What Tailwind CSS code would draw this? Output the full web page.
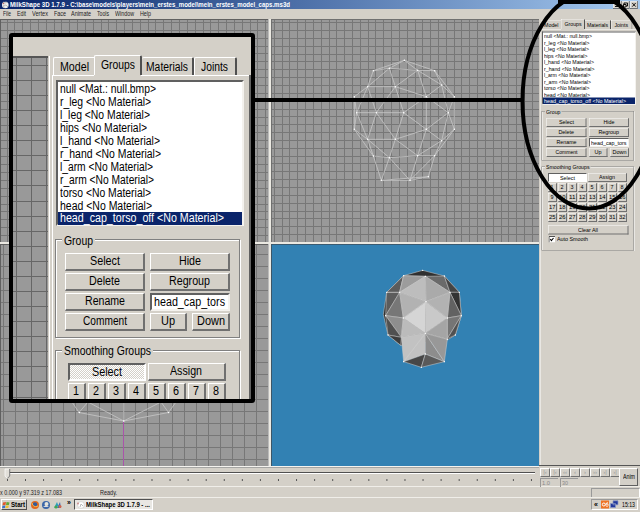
<!DOCTYPE html>
<html lang="en">
<head>
<meta charset="utf-8">
<title>MilkShape 3D 1.7.9</title>
<script src="https://cdn.jsdelivr.net/npm/@tailwindcss/browser@4"></script>
</head>
<body class="w-[640px] h-[512px] overflow-hidden bg-[#d4d0c8] font-['Liberation_Sans',Arial,sans-serif] text-black">

<template id="panel">
  <div class="w-[204px] h-[894px] text-[12.5px] leading-[13px] bg-[#d4d0c8]">
    <!-- tabs -->
    <div class="flex items-end h-[20px] pl-px">
      <div class="flex items-center justify-center w-[41px] h-[18px] border-t border-l border-white rounded-tl-xs pt-px"><span data-w="29">Model</span></div>
      <div class="flex items-center justify-center w-[48px] h-[20px] border-t border-l border-white border-r-2 border-r-[#505050] rounded-t-xs pb-px"><span data-w="34">Groups</span></div>
      <div class="flex items-center justify-center w-[52px] h-[18px] border-t border-white border-r-2 border-r-[#505050] rounded-t-xs pt-px"><span data-w="42">Materials</span></div>
      <div class="flex items-center justify-center w-[43px] h-[18px] border-t border-l border-white border-r-2 border-r-[#505050] rounded-t-xs pt-px pr-px"><span data-w="27">Joints</span></div>
    </div>
    <div class="h-[874px] border-l border-white relative">
      <div class="flex h-px"><i class="w-[41px] bg-white"></i><i class="w-[47px]"></i><i class="flex-1 bg-white"></i></div>
      <div class="pl-[3px] pt-[4px]">
        <!-- group list -->
        <div class="w-[188px] h-[146px] bg-white border-t-2 border-l-2 border-t-[#606060] border-l-[#606060] border-r-2 border-b-2 border-r-[#f4f2ee] border-b-[#f4f2ee] pt-px">
          <div class="h-[13px] pl-[2px]"><span data-w="96">null &lt;Mat.: null.bmp&gt;</span></div>
          <div class="h-[13px] pl-[2px]"><span data-w="91">r_leg &lt;No Material&gt;</span></div>
          <div class="h-[13px] pl-[2px]"><span data-w="90">l_leg &lt;No Material&gt;</span></div>
          <div class="h-[13px] pl-[2px]"><span data-w="87">hips &lt;No Material&gt;</span></div>
          <div class="h-[13px] pl-[2px]"><span data-w="100">l_hand &lt;No Material&gt;</span></div>
          <div class="h-[13px] pl-[2px]"><span data-w="101">r_hand &lt;No Material&gt;</span></div>
          <div class="h-[13px] pl-[2px]"><span data-w="93">l_arm &lt;No Material&gt;</span></div>
          <div class="h-[13px] pl-[2px]"><span data-w="94">r_arm &lt;No Material&gt;</span></div>
          <div class="h-[13px] pl-[2px]"><span data-w="91">torso &lt;No Material&gt;</span></div>
          <div class="h-[12px] pl-[2px]"><span data-w="92">head &lt;No Material&gt;</span></div>
          <div class="h-[13px] pl-[2px] bg-[#0a246a] text-white leading-[13px]"><span data-w="164">head_cap_torso_off &lt;No Material&gt;</span></div>
        </div>
      </div>
      <!-- group box -->
      <div class="ml-[2px] mt-[9px] w-[185px] h-[103px] relative">
        <div class="absolute inset-x-0 top-[4px] bottom-0 border border-[#808080] shadow-[1px_1px_0_#fff,inset_1px_1px_0_#fff]"></div>
        <div class="relative h-[13px] ml-[7px] w-[33px] pl-[2px] bg-[#d4d0c8]"><span data-w="29">Group</span></div>
        <div class="relative grid grid-cols-[80px_37px_37px] gap-x-[5px] gap-y-[2px] ml-[10px] mt-[5px]">
          <button class="h-[18px] border border-white border-r-2 border-b-2 border-r-[#707070] border-b-[#707070]"><span data-w="30">Select</span></button>
          <button class="col-span-2 h-[18px] w-[80px] border border-white border-r-2 border-b-2 border-r-[#707070] border-b-[#707070]"><span data-w="22">Hide</span></button>
          <button class="h-[18px] border border-white border-r-2 border-b-2 border-r-[#707070] border-b-[#707070]"><span data-w="31">Delete</span></button>
          <button class="col-span-2 h-[18px] w-[80px] border border-white border-r-2 border-b-2 border-r-[#707070] border-b-[#707070]"><span data-w="41">Regroup</span></button>
          <button class="h-[18px] border border-white border-r-2 border-b-2 border-r-[#707070] border-b-[#707070]"><span data-w="40">Rename</span></button>
          <div class="col-span-2 h-[18px] w-[80px] bg-white border-2 border-t-[#606060] border-l-[#606060] border-r-[#f4f2ee] border-b-[#f4f2ee] pl-[2px] leading-[15px]"><span data-w="71">head_cap_tors</span></div>
          <button class="h-[18px] border border-white border-r-2 border-b-2 border-r-[#707070] border-b-[#707070]"><span data-w="44">Comment</span></button>
          <button class="h-[18px] border border-white border-r-2 border-b-2 border-r-[#707070] border-b-[#707070]"><span data-w="14">Up</span></button>
          <button class="h-[18px] w-[38px] border border-white border-r-2 border-b-2 border-r-[#707070] border-b-[#707070]"><span data-w="28">Down</span></button>
        </div>
      </div>
      <!-- smoothing groups -->
      <div class="ml-[2px] mt-[7px] w-[185px] h-[173px] relative">
        <div class="absolute inset-x-0 top-[5px] bottom-0 border border-[#808080] shadow-[1px_1px_0_#fff,inset_1px_1px_0_#fff]"></div>
        <div class="relative h-[13px] ml-[7px] w-[91px] pl-[2px] bg-[#d4d0c8]"><span data-w="87">Smoothing Groups</span></div>
        <div class="relative flex gap-[2px] ml-[13px] mt-[5px]">
          <button class="h-[18px] w-[78px] border-2 border-t-[#606060] border-l-[#606060] border-r-white border-b-white bg-[repeating-conic-gradient(#fff_0_25%,#d4d0c8_0_50%)] bg-[length:2px_2px]"><span data-w="30">Select</span></button>
          <button class="h-[18px] w-[78px] border border-white border-r-2 border-b-2 border-r-[#707070] border-b-[#707070]"><span data-w="32">Assign</span></button>
        </div>
        <div class="relative grid grid-cols-8 gap-[2px] w-[158px] ml-[13px] mt-[2px]" data-numbers></div>
        <button class="relative block ml-[13px] mt-[7px] h-[18px] w-[161px] border border-white border-r-2 border-b-2 border-r-[#707070] border-b-[#707070]"><span data-w="40">Clear All</span></button>
        <div class="relative flex items-center ml-[14px] mt-[3px] gap-[4px]">
          <svg class="w-[13px] h-[13px]" viewBox="0 0 13 13"><path d="M0 0h13v13H0z" fill="#fff"/><path d="M1 13V1H13" fill="none" stroke="#505050" stroke-width="2"/><path d="M3.5 6l2.3 3L10 4" fill="none" stroke="#000" stroke-width="2.2"/></svg>
          <span data-w="62">Auto Smooth</span>
        </div>
      </div>
    </div>
  </div>
</template>

<div class="flex flex-col w-[640px] h-[512px] relative text-[6px]">
  <!-- title bar -->
  <div class="flex items-center h-[9px] bg-linear-to-r from-[#0a246a] to-[#a6caf0] text-white font-bold text-[6.5px] leading-[9px] shrink-0">
    <svg class="w-[8px] h-[8px] ml-px mr-px shrink-0" viewBox="0 0 8 8"><circle cx="4.3" cy="4" r="3.3" fill="#eee"/><path d="M2 1l2 1 2-1M3 7L2.500 4.500 5 4l2 2" fill="none" stroke="#aaa" stroke-width=".8"/><circle cx="2.500" cy="2.500" r=".8" fill="#b66"/></svg>
    <span data-w="280">MilkShape 3D 1.7.9 - C:\base\models\players\mein_erstes_model\mein_erstes_model_caps.ms3d</span>
    <div class="ml-auto mr-[2px] flex text-black">
      <svg class="w-[25px] h-[8px]" viewBox="0 0 25 8"><g fill="#d4d0c8" stroke="#fff" stroke-width=".6"><path d="M.3.300h8v7h-8zM8.300.300h8v7h-8zM17.500.300h7v7h-7z"/></g><path d="M8.300 0v7.500H0M16.300 0v7.500H9M24.600 0v7.500H17" fill="none" stroke="#404040" stroke-width=".7"/><path d="M2 5.500h3M11 4V2h3.500v3H13M10.500 3.500H13V6h-2.500zM19.300 2l3.400 3.600M22.700 2l-3.400 3.600" fill="none" stroke="#000" stroke-width=".9"/></svg>
    </div>
  </div>
  <!-- menu -->
  <div class="flex h-[10px] shrink-0 leading-[10px] text-[6.5px] pl-[3px] text-[#222]">
    <div class="w-[14px]"><span data-w="8">File</span></div><div class="w-[15px]"><span data-w="9">Edit</span></div><div class="w-[22px]"><span data-w="16">Vertex</span></div><div class="w-[17px]"><span data-w="12">Face</span></div><div class="w-[26px]"><span data-w="20">Animate</span></div><div class="w-[18px]"><span data-w="12">Tools</span></div><div class="w-[25px]"><span data-w="19">Window</span></div><div><span data-w="11">Help</span></div>
  </div>

  <div class="flex h-[447px] shrink-0">
    <!-- viewports -->
    <div class="grid grid-cols-[269px_268px] grid-rows-[223px_222px] gap-[2px] w-[539px] shrink-0 bg-[#ebe9e2]">
      <svg class="w-[269px] h-[223px]" viewBox="0 19 269 223">
        <rect y="19" width="269" height="223" fill="#999"/>
        <path data-grid="0 19 269 223 7 22.300 7.840 7.900" stroke="#777" fill="none"/>
        <path d="M0 19.500h269M.5 19v223" stroke="#606060" fill="none"/><path d="M268.500 19v223" stroke="#bbb"/>
      </svg>
      <svg class="w-[268px] h-[223px]" viewBox="271 19 268 223">
        <rect x="271" y="19" width="268" height="223" fill="#999"/>
        <path data-grid="271 19 268 223 274.300 22.700 7.820 7.850" stroke="#777" fill="none"/>
        <path d="M271 19.500h268M271.500 19v223" stroke="#707070" fill="none"/>
        <g transform="translate(340 50) scale(.33333)" fill="none" stroke="#c6c6c6" stroke-width="2.400">
          <path d="M193 31L100 62 83 110 43 140V238L100 318 124 391 210 391 265 380 284 317 343 238V140L284 62zM193 31L148 55 100 62M193 31L233 61 284 62M148 55L233 61M148 55L83 110H166L148 55M233 61L166 110 259 140 233 61 305 105 284 62M305 105L259 140M305 105L343 140M83 110L50 188 43 140M83 110L109 188M166 110L109 188M166 110L191 188M50 188H191L259 140V238L191 188 166 268 109 188 83 268 50 188 43 238 83 268H166L259 238 325 188 259 140M305 105L325 188 343 140M325 188L343 238 305 272 325 188M259 238L305 272 284 317M259 238L233 317 166 268 148 323 83 268 100 318 148 323 233 317H284M233 317L305 272M148 323L124 391 265 380M148 323L210 391 233 317M210 391L284 317"/>
          <path stroke="#fff" stroke-width="4.500" stroke-linecap="round" d="M193 31h.1M148 55h.1M100 62h.1M233 61h.1M284 62h.1M83 110h.1M166 110h.1M305 105h.1M43 140h.1M259 140h.1M343 140h.1M50 188h.1M109 188h.1M191 188h.1M325 188h.1M43 238h.1M259 238h.1M343 238h.1M83 268h.1M166 268h.1M305 272h.1M100 318h.1M148 323h.1M233 317h.1M284 317h.1M124 391h.1M210 391h.1M265 380h.1"/>
        </g>
      </svg>
      <svg class="w-[269px] h-[222px]" viewBox="0 244 269 222">
        <rect y="244" width="269" height="222" fill="#999"/>
        <path data-grid="0 244 269 222 3.300 254.300 12.050 12.060" stroke="#777" fill="none"/>
        <path d="M0 244.500h269M.5 244v222" stroke="#606060" fill="none"/><path d="M268.500 244v222" stroke="#bbb"/>
        <path d="M123.500 421v45" stroke="#b050b0" stroke-width=".9"/>
        <path d="M72 402L79 412.500 123.700 421 168.500 412.500 176 402M79 412.500L88 402 123.700 421V402M168.500 412.500L161 402 123.700 421" fill="none" stroke="#c6c6c6" stroke-width=".8"/>
        <path stroke="#fff" stroke-width="1.500" stroke-linecap="round" d="M79.300 412.500h.1M123.700 421h.1M168.500 412.500h.1"/>
      </svg>
      <svg class="w-[268px] h-[222px]" viewBox="271 244 268 222">
        <rect x="271" y="244" width="268" height="222" fill="#3281b3"/>
        <path d="M271 244.400h268M271.500 244v222" stroke="#3c5668" fill="none"/>
        <g transform="translate(370 260) scale(.33333)" stroke="#ccc" stroke-width="1.600" stroke-linejoin="round">
          <path fill="#303030" d="M158 31L223 48 268 97 274 167 256 225 232 240 92 256 54 225 40 163 50 97 101 47z"/>
          <path fill="#5c5c5c" d="M101 47L50 97 89 97zM50 97L89 97 47 167z"/>
          <path fill="#747474" d="M101 47L166 49 89 97z"/><path fill="#777" d="M89 97L47 167 100 174z"/>
          <path fill="#8e8e8e" d="M47 167L100 174 94 232z"/><path fill="#505050" d="M47 167L94 232 54 225z"/><path fill="#3d3d3d" d="M54 225L94 232 92 256z"/>
          <path fill="#9c9c9c" d="M101 47L166 49 89 97z"/>
          <path fill="#6a6a6a" d="M166 49L223 48 240 97z"/><path fill="#444" d="M223 48L268 97 240 97z"/>
          <path fill="#333" d="M240 97H268L274 167z"/><path fill="#626262" d="M240 97L274 167 232 174z"/><path fill="#757575" d="M232 174L274 167 232 236z"/><path fill="#505050" d="M274 167L256 225 232 236z"/>
          <path fill="#bdbdbd" d="M166 49L89 97 168 125z"/><path fill="#aaa" d="M166 49L240 97 168 125z"/>
          <path fill="#b2b2b2" d="M89 97L168 125 100 174zM240 97L168 125 232 174z"/>
          <path fill="#d5d5d5" stroke="#d5d5d5" d="M168 125L100 174 166 220z"/><path fill="#c9c9c9" stroke="#c9c9c9" d="M168 125L232 174 166 220z"/>
          <path fill="#bbb" d="M100 174L166 220 94 232z"/><path fill="#a5a5a5" d="M232 174L166 220 232 238z"/>
          <path fill="#c2c2c2" d="M94 232L166 220 101 305zM166 220V282L101 305z"/><path fill="#8d8d8d" d="M166 220L223 305 166 282z"/><path fill="#989898" d="M166 220L232 238 223 305z"/>
          <path fill="#474747" d="M101 305L166 282 154 322z"/><path fill="#5a5a5a" d="M166 282L223 305 154 322z"/>
          <path fill="none" stroke="#fff" stroke-width="4" stroke-linecap="round" d="M158 31h.1M101 47h.1M166 49h.1M223 48h.1M50 97h.1M89 97h.1M240 97h.1M268 97h.1M168 125h.1M47 167h.1M274 167h.1M100 174h.1M232 174h.1M166 220h.1M54 225h.1M256 225h.1M232 238h.1M166 282h.1M101 305h.1M223 305h.1M154 322h.1"/>
        </g>
      </svg>
    </div>
    <div class="w-[101px] overflow-hidden border-b border-[#555]">
      <div class="origin-top-left scale-50 w-[204px] ml-px" data-panel></div>
    </div>
  </div>

  <!-- timeline -->
  <div class="flex h-[21px] shrink-0 border-b border-[#f0eee9]">
    <svg class="w-[539px] h-[20px] shrink-0" viewBox="0 466 539 20">
      <path d="M0 466.500h539" stroke="#f5f3ef"/><path d="M0 467.500h539" stroke="#999" stroke-width=".8"/><path d="M8 472.500h527" stroke="#505050"/><path d="M8 473.500h527" stroke="#fff"/>
      <path d="M7.500 479v2" stroke="#555"/>
      <path d="M25 480h512" stroke="#555" stroke-width="2" stroke-dasharray="1 17.070"/>
      <path d="M5 469h4.500v7L7.300 478.500 5 476z" fill="#e2dfd9" stroke="#fff" stroke-width=".7"/><path d="M9.700 469v7L7.300 478.500" fill="none" stroke="#505050" stroke-width=".8"/>
    </svg>
    <div class="flex w-[101px] pt-[2px] pl-px">
      <div class="w-[79px] shrink-0">
        <div class="flex text-[#999] text-[6px] leading-[8px]" data-transport></div>
        <div class="flex gap-[2px] text-[#888] text-[6px] mt-px">
          <div class="w-[18px] h-[9px] border-t border-l border-[#999] pl-px leading-[8px]"><span data-w="8">1.0</span></div>
          <div class="w-[18px] h-[9px] border-t border-l border-[#999] pl-px leading-[8px]"><span data-w="6">30</span></div>
        </div>
      </div>
      <div class="w-[19px] shrink-0 h-[18px] border border-white border-r-[#606060] border-b-[#606060] flex items-center justify-center text-[6.5px]"><span data-w="12">Anim</span></div>
    </div>
  </div>
  <!-- status bar -->
  <div class="flex items-center h-[11px] shrink-0 border-b border-[#f0eee9] text-[6.5px] leading-[9px] text-[#222]">
    <div class="w-[100px]"><span data-w="62">x 0.000 y 97.319 z 17.083</span></div><div><span data-w="17">Ready.</span></div>
    <div class="ml-auto w-[49px] h-[9px] border-t border-l border-[#999] border-r border-r-white"></div>
  </div>
  <!-- taskbar -->
  <div class="flex items-center h-[13px] shrink-0 text-[6.5px] leading-[9px]">
    <div class="flex items-center ml-px w-[26px] h-[11px] border border-white border-r-[#505050] border-b-[#505050] font-bold">
      <svg class="w-[8px] h-[8px] mr-px shrink-0" viewBox="0 0 8 8"><path fill="#e05a2c" d="M1 1.500l3-.5-.5 3-3 .2z"/><path fill="#62a838" d="M4.500 1l3 .5-.6 2.500H4z"/><path fill="#3c71c8" d="M.5 4.700l2.900-.2-.4 2.500-3 .2z"/><path fill="#efc030" d="M3.900 4.500h3L6.200 7H3.300z"/></svg>
      <span data-w="14">Start</span>
    </div>
    <svg class="w-[34px] h-[10px] ml-[3px]" viewBox="0 0 34 10"><circle cx="5" cy="5" r="4" fill="#e06a20"/><circle cx="5" cy="4.500" r="2.200" fill="#315b9c"/><path d="M2 3q1 5 6 3" fill="none" stroke="#ffb548"/><circle cx="16" cy="5" r="4" fill="#3b66a8"/><circle cx="16.500" cy="4" r="2" fill="#e5e5dc"/><path d="M13 7l3-2 3 2z" fill="#ddd"/><path d="M24 8l3-6 1.500 4z" fill="#27a0ba"/><path d="M27 8l3-6 1 6z" fill="#3469b5"/><circle cx="26" cy="7" r="1.600" fill="#45a651"/><circle cx="30" cy="6.500" r="1.500" fill="#d2634b"/></svg>
    <div class="ml-[3px] w-[7px] text-[7px] font-bold leading-[6px] pb-[3px]">»</div>
    <div class="flex items-center w-[79px] h-[11px] bg-[#e9e7e3] border border-[#505050] border-r-white border-b-white font-bold">
      <svg class="w-[9px] h-[8px] mx-px shrink-0" viewBox="0 0 9 8"><circle cx="5" cy="4" r="3.400" fill="#fff" stroke="#bbb" stroke-width=".5"/><path d="M4 6l1-3 2 2" fill="none" stroke="#bbb"/><circle cx="2" cy="2.500" r=".9" fill="#c88"/></svg>
      <span data-w="64">MilkShape 3D 1.7.9 - ...</span>
    </div>
    <div class="ml-auto mr-[2px] flex items-center w-[47px] h-[11px] border border-[#999] border-r-white border-b-white">
      <div class="w-[9px] pl-[2px] font-bold text-[7px]">«</div>
      <svg class="w-[18px] h-[9px] shrink-0" viewBox="0 0 18 9"><path d="M0 .5h8v8H0z" fill="#ee7426"/><circle cx="2.800" cy="4.500" r="1.500" fill="none" stroke="#fff"/><path d="M7 2.500Q4 3 5 5.500t2 0-2-1.500" fill="none" stroke="#fff" stroke-width=".8"/><path d="M12 .8h5v4h-5zM9.500 3.500h5v4h-5z" fill="#23399c" stroke="#8c98c4" stroke-width=".7"/></svg>
      <span class="ml-[3px]" data-w="13">15:13</span>
    </div>
  </div>

  <!-- magnified callout -->
  <div class="absolute left-[9px] top-[33px] w-[246px] h-[370px] border-4 border-black rounded-[3px] bg-[#d4d0c8] overflow-hidden flex">
    <svg class="w-[39px] h-[363px] shrink-0" viewBox="13 37 39 363">
      <path d="M13 57h35v343H13z" fill="#999"/>
      <path data-grid="13 57 35 343 16.200 65.300 15 15.080" stroke="#666" fill="none"/><path d="M13 57h35" stroke="#555" stroke-width="2"/><path d="M49.500 56v344" stroke="#fff"/>
    </svg>
    <div class="w-[204px] shrink-0 pt-[18px]" data-panel></div>
    <div class="absolute right-0 top-[38px] w-[2px] bottom-0 bg-[#606060]"></div>
  </div>
  <svg class="absolute left-0 top-0 w-[640px] h-[512px] pointer-events-none" viewBox="0 0 640 512" fill="none" stroke="#000" stroke-width="4">
    <path d="M254 100H522M558 2h62"/><ellipse cx="589" cy="101" rx="66.500" ry="107.500"/>
  </svg>
</div>

<script>
const bevel = 'border-white border-r-[#707070] border-b-[#707070]';
const tpl = document.getElementById('panel');
document.querySelectorAll('[data-panel]').forEach(host => {
  host.appendChild(tpl.content.cloneNode(true));
  const grid = host.querySelector('[data-numbers]');
  for (let n = 1; n <= 32; n++) {
    const b = document.createElement('button');
    b.className = 'h-[18px] border border-r-2 border-b-2 ' + bevel;
    b.innerHTML = '<span data-w="' + (n < 10 ? 6 : 13) + '">' + n + '</span>';
    grid.appendChild(b);
  }
});
const bar = document.querySelector('[data-transport]');
['|‹', '|‹', '‹‹', '‹', '›', '››', '›|', '›|'].forEach(t => {
  const b = document.createElement('div');
  b.className = 'w-[10px] h-[9px] shrink-0 border text-center leading-[7px] ' + bevel;
  b.textContent = t;
  bar.appendChild(b);
});
// Grid lines snapped to whole pixels: x y width height firstX firstY stepX stepY
document.querySelectorAll('[data-grid]').forEach(p => {
  const [x, y, w, h, fx, fy, sx, sy] = p.dataset.grid.split(' ').map(Number);
  let d = '';
  for (let i = fx; i < x + w; i += sx) d += 'M' + (Math.floor(i) + .5) + ' ' + y + 'v' + h;
  for (let j = fy; j < y + h; j += sy) d += 'M' + x + ' ' + (Math.floor(j) + .5) + 'h' + w;
  p.setAttribute('d', d);
});
// Condense each label to its bitmap-font width, again whenever its natural width changes.
const fit = s => {
  const want = +s.dataset.w, have = parseFloat(getComputedStyle(s).width);
  if (!have) return;
  s.style.transform = 'scaleX(' + want / have + ')';
  s.style.marginRight = (want - have) + 'px';
};
const watcher = new ResizeObserver(list => list.forEach(e => fit(e.target)));
document.querySelectorAll('[data-w]').forEach(s => {
  Object.assign(s.style, { display: 'inline-block', whiteSpace: 'nowrap', flexShrink: 0, transformOrigin: '0 50%', verticalAlign: 'top' });
  fit(s);
  watcher.observe(s);
});
window.addEventListener('load', () => document.querySelectorAll('[data-w]').forEach(fit));
</script>
</body>
</html>
